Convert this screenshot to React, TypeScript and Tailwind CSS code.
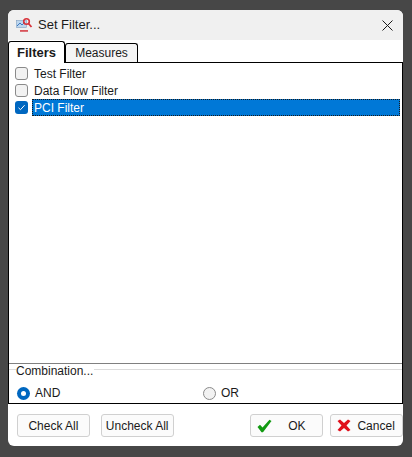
import React from "react";

function CheckRow({ label, checked }: { label: string; checked?: boolean }) {
    return (
        <div className="flex h-[17px] items-center">
            <div
                className={
                    checked
                        ? "ml-[6px] flex h-[13px] w-[13px] items-center justify-center rounded-[3px] bg-[#0067c0]"
                        : "ml-[6px] h-[13px] w-[13px] rounded-[3px] border border-[#8a8a8a] bg-[#f2f2f2]"
                }
            >
                {checked && (
                    <svg width="9" height="9" viewBox="0 0 9 9" fill="none">
                        <path d="M1.5 4.8 L3.5 6.7 L7.6 2.2" stroke="#ffffff" strokeWidth="1" />
                    </svg>
                )}
            </div>
            <div
                className={
                    checked
                        ? "ml-[4px] mr-[2px] flex h-[17px] flex-1 items-center border border-dotted border-[#1a1a1a] bg-[#0078d7] pl-[1px] text-white"
                        : "ml-[6px] text-[#1a1a1a]"
                }
            >
                {label}
            </div>
        </div>
    );
}

function Radio({ label, checked }: { label: string; checked?: boolean }) {
    return (
        <div className="flex items-center gap-[5px]">
            {checked ? (
                <div className="flex h-[13px] w-[13px] items-center justify-center rounded-full bg-[#0067c0]">
                    <div className="h-[5px] w-[5px] rounded-full bg-white" />
                </div>
            ) : (
                <div className="h-[13px] w-[13px] rounded-full border border-[#8a8a8a] bg-[#f2f2f2]" />
            )}
            <span>{label}</span>
        </div>
    );
}

function DialogButton({ label, width, icon }: { label: string; width: string; icon?: React.ReactNode }) {
    return (
        <button className={`flex h-[23px] items-center justify-center rounded-[3px] border border-[#d0d0d0] bg-[#fbfbfb] text-[#1a1a1a] ${width}`}>
            {icon}
            <span className={icon ? "flex-1 pr-[1px] text-center" : ""}>{label}</span>
        </button>
    );
}

function AppIcon() {
    return (
        <svg width="17" height="17" viewBox="0 0 17 17" fill="none">
            <rect x="0.5" y="3.5" width="10" height="7" fill="#bcd6ee" stroke="#7f9fc0" strokeWidth="0.6" />
            <path d="M1 9 L4 6 L6 8 L9 5" stroke="#3b78c2" strokeWidth="1" />
            <circle cx="10.5" cy="4.5" r="2.8" stroke="#d8333a" strokeWidth="1.6" />
            <path d="M12.5 6.5 L15.5 10" stroke="#d8333a" strokeWidth="1.8" />
            <rect x="4" y="13" width="8" height="1.8" fill="#d8535a" />
        </svg>
    );
}

function App() {
    return (
        <div className="h-[457px] w-[412px] overflow-hidden bg-[#474747] pl-[8px] pt-[10px] font-['Liberation_Sans',sans-serif] text-[12px] text-[#1a1a1a]">
            <div className="flex h-[436px] w-[395px] flex-col overflow-hidden rounded-[6px] bg-white">
                <div className="flex h-[30px] items-center bg-[#f0f0f0] pl-[8px]">
                    <AppIcon />
                    <span className="ml-[5px] text-[13px]">Set Filter...</span>
                    <svg className="ml-auto mr-[10px]" width="11" height="11" viewBox="0 0 11 11" fill="none">
                        <path d="M0.5 0.5 L10.5 10.5 M10.5 0.5 L0.5 10.5" stroke="#1a1a1a" strokeWidth="1" />
                    </svg>
                </div>

                <div className="flex h-[22px] items-end bg-white">
                    <div className="z-10 -mb-px flex h-[22px] w-[57px] items-center justify-center rounded-t-[3px] border border-b-0 border-black bg-white text-[13px] font-bold">
                        Filters
                    </div>
                    <div className="flex h-[19px] w-[73px] items-center justify-center rounded-t-[3px] border border-b-0 border-black bg-[#f5f5f5]">
                        Measures
                    </div>
                </div>

                <div className="flex h-[342px] flex-col border border-black">
                    <div className="flex-1 pt-[2px]">
                        <CheckRow label="Test Filter" />
                        <CheckRow label="Data Flow Filter" />
                        <CheckRow label="PCI Filter" checked />
                    </div>
                    <div className="h-[40px] border-t border-[#808080]">
                        <div className="relative mt-[5px] border-t border-[#dcdcdc]">
                            <span className="absolute -top-[5px] left-[7px] bg-white pr-[1px] leading-[12px]">Combination...</span>
                        </div>
                        <div className="flex pl-[8px] pt-[14px]">
                            <div className="w-[186px]">
                                <Radio label="AND" checked />
                            </div>
                            <Radio label="OR" />
                        </div>
                    </div>
                </div>

                <div className="flex pl-[9px] pt-[10px]">
                    <DialogButton label="Check All" width="w-[73px]" />
                    <div className="w-[11px]" />
                    <DialogButton label="Uncheck All" width="w-[73px]" />
                    <div className="w-[77px]" />
                    <DialogButton
                        label="OK"
                        width="w-[73px] pl-[6px]"
                        icon={
                            <svg width="15" height="14" viewBox="0 0 15 14">
                                <path d="M0.5 8 L3 5.8 L5.5 8.5 L12.5 0.8 L14.5 2 L6 13.2 L4.5 13.2 Z" fill="#129a12" />
                            </svg>
                        }
                    />
                    <div className="w-[7px]" />
                    <DialogButton
                        label="Cancel"
                        width="w-[73px] pl-[6px]"
                        icon={
                            <svg width="14" height="13" viewBox="0 0 14 13">
                                <path d="M0.5 2 L3 0.5 L7 4 L11 0.5 L13.5 2 L9.5 6.5 L13.5 11 L11 12.5 L7 9 L3 12.5 L0.5 11 L4.5 6.5 Z" fill="#e0101c" />
                            </svg>
                        }
                    />
                </div>
            </div>
        </div>
    );
}

export default App;
